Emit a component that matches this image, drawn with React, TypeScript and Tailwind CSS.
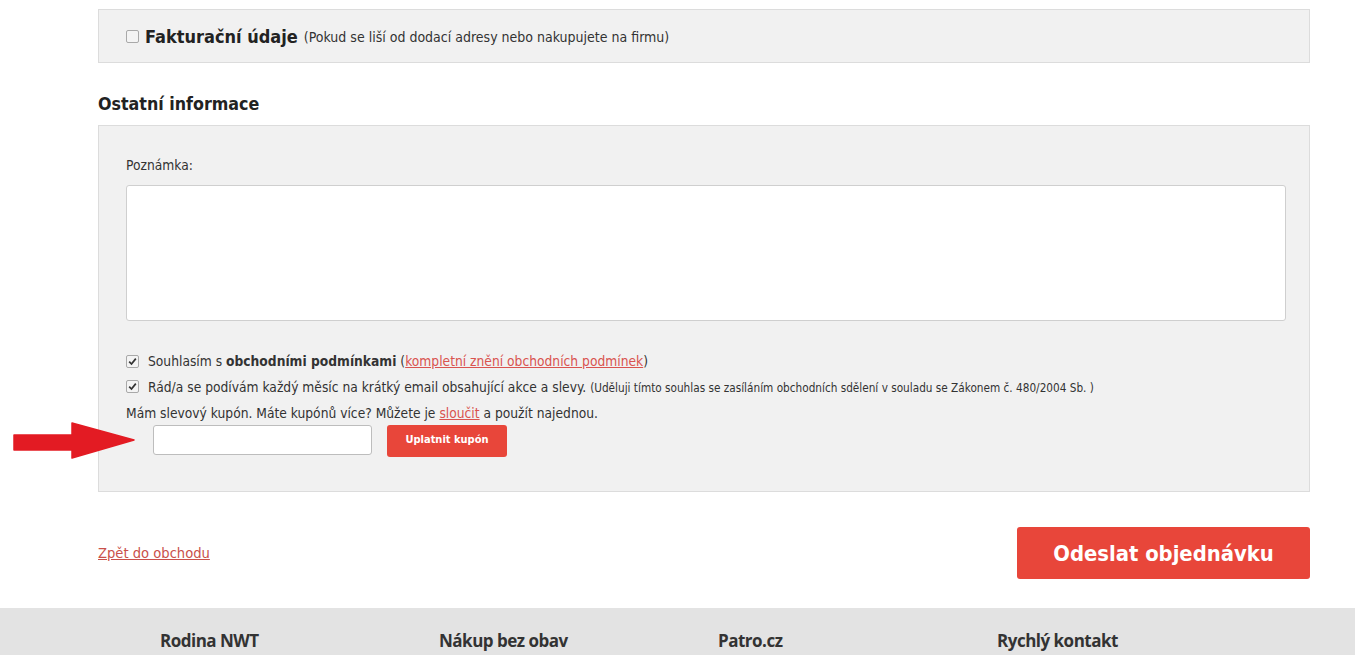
import React from 'react';

const font = { fontFamily: '"DejaVu Sans Condensed", "DejaVu Sans", sans-serif' };

const CheckMark = ({ checked }: { checked: boolean }) => (
  <span className="inline-flex h-[13px] w-[13px] shrink-0 items-center justify-center rounded-[2px] border border-[#a9a9a9] bg-[#f4f4f4]">
    {checked && (
      <svg width="9" height="9" viewBox="0 0 9 9">
        <path d="M1.2 4.6 L3.5 7 L7.8 1.6" fill="none" stroke="#333" strokeWidth="1.7" />
      </svg>
    )}
  </span>
);

const RedArrow = () => (
  <svg className="absolute left-[13px] top-[422px]" width="122" height="37" viewBox="0 0 122 37">
    <path d="M1 13 L59 13 L59 1 L121 18 L59 36 L59 28 L1 28 Z" fill="#e31b23" strokeLinejoin="round" stroke="#e31b23" strokeWidth="1.5" />
  </svg>
);

export default function App() {
  return (
    <div className="relative min-h-[655px] w-[1355px] overflow-hidden bg-white text-[#333]" style={font}>
      <RedArrow />

      <div className="ml-[98px] w-[1212px] pt-[9px]">
        {/* Fakturační údaje */}
        <div className="flex h-[54px] items-center gap-[6px] border border-[#dcdcdc] bg-[#f1f1f1] pl-[27px]">
          <CheckMark checked={false} />
          <span className="text-[18px] font-bold text-[#222]">Fakturační údaje</span>
          <span className="mt-[2px] text-[14px] text-[#333]">(Pokud se liší od dodací adresy nebo nakupujete na firmu)</span>
        </div>

        <h2 className="mt-[28px] text-[17.7px] font-bold text-[#222]">Ostatní informace</h2>

        {/* Ostatní informace */}
        <div className="mt-[7px] h-[367px] border border-[#dcdcdc] bg-[#f1f1f1] px-[27px] pt-[29px]">
          <div className="text-[13.7px] text-[#333]">Poznámka:</div>
          <textarea className="mt-[10px] block h-[136px] w-[1160px] resize-none rounded-[3px] border border-[#cfcfcf] bg-white" />

          <div className="mt-[30px] flex items-center gap-[9px] text-[13.7px]">
            <CheckMark checked />
            <span>
              Souhlasím s <b>obchodními podmínkami</b> (
              <a className="text-[#d9534f] underline">kompletní znění obchodních podmínek</a>)
            </span>
          </div>
          <div className="mt-[5px] flex items-center gap-[9px] text-[13.7px]">
            <CheckMark checked />
            <span>
              Rád/a se podívám každý měsíc na krátký email obsahující akce a slevy.{' '}
              <span className="text-[11.7px]">(Uděluji tímto souhlas se zasíláním obchodních sdělení v souladu se Zákonem č. 480/2004 Sb. )</span>
            </span>
          </div>
          <div className="mt-[6px] text-[13.7px]">
            Mám slevový kupón. Máte kupónů více? Můžete je <a className="text-[#d9534f] underline">sloučit</a> a použít najednou.
          </div>
          <div className="mt-[1px] flex items-start gap-[15px] pl-[27px]">
            <input className="h-[30px] w-[219px] rounded-[3px] border border-[#bdbdbd] bg-white" />
            <button className="h-[32px] w-[120px] rounded-[3px] bg-[#e8463a] text-[11px] font-bold text-white">Uplatnit kupón</button>
          </div>
        </div>

        {/* Actions */}
        <div className="mt-[35px] flex items-center justify-between">
          <a className="text-[14.6px] text-[#c9504a] underline">Zpět do obchodu</a>
          <button className="h-[52px] w-[293px] rounded-[3px] bg-[#e8463a] pt-[3px] text-[21.8px] font-bold text-white">Odeslat objednávku</button>
        </div>
      </div>

      {/* Footer */}
      <div className="mt-[29px] h-[60px] bg-[#e3e3e3] pt-[20px]">
        <div className="grid grid-cols-[279px_279px_279px_279px] pl-[160px] text-[17px] font-bold text-[#333]" style={{ fontFamily: '"Open Sans", sans-serif', letterSpacing: '-0.5px' }}>
          <span>Rodina NWT</span>
          <span>Nákup bez obav</span>
          <span>Patro.cz</span>
          <span>Rychlý kontakt</span>
        </div>
      </div>
    </div>
  );
}
